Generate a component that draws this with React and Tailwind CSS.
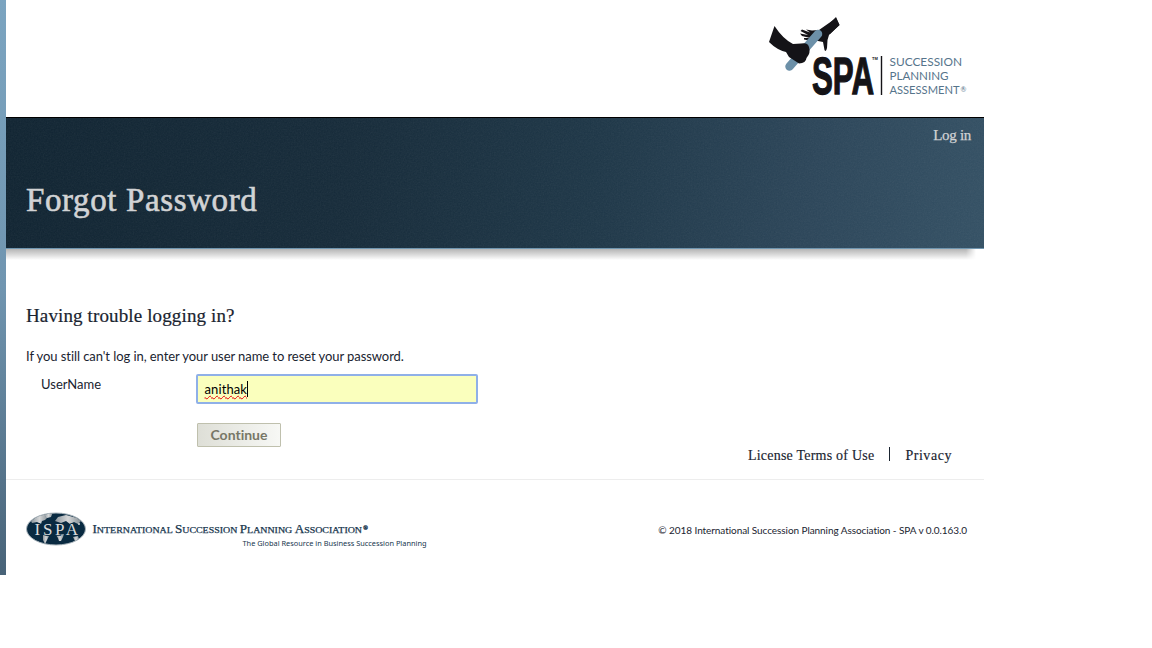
import React from "react";

function SpaLogo() {
  return (
    <svg width="220" height="100" viewBox="0 0 220 100" role="img" aria-label="SPA Succession Planning Assessment">
      <path d="M69 13 L76 8 L79.500 15 L72 22 L69 25 L67.500 30 L67 38 Q66 42.500 64.500 40 L63 32 L58 31 L51 31 L44 29.500 L44 28 L50 28 L42 26 L40 23.500 L48 25 L40.500 21 L42 19.500 L50 22.500 L46 19.500 L52 20.500 L59 20 Z" fill="#141317" />
      <path d="M69 14 L76 7 L79.500 15 L70 24 Z" fill="#141317" />
      <path d="M29.500 56.500 L58 24" stroke="#6c90a8" strokeWidth="8.500" strokeLinecap="round" />
      <path d="M14.500 16 L9 32 Q17 40 26 42 L29 47 L39 53.500 Q46 53 46.500 48 Q51 43 49 37 Q48 32 41 33.500 L33 34 Q23 29 14.500 16 Z" fill="#141317" />
      <text x="52" y="84" textLength="62" lengthAdjust="spacingAndGlyphs" fontFamily="Liberation Sans" fontWeight="700" fontSize="52" fill="#141317" stroke="#141317" strokeWidth="1.300">SPA</text>
      <text x="112" y="50" fontFamily="Liberation Sans" fontWeight="700" fontSize="4" fill="#141317">TM</text>
      <path d="M121.500 46 V85" stroke="#141317" strokeWidth="1.400" />
      <g fontFamily="Lato" fontSize="11.600" fill="#56748b">
        <text x="129.500" y="56" textLength="72.500" lengthAdjust="spacingAndGlyphs">SUCCESSION</text>
        <text x="129.500" y="70" textLength="59" lengthAdjust="spacingAndGlyphs">PLANNING</text>
        <text x="129.500" y="84" textLength="70" lengthAdjust="spacingAndGlyphs">ASSESSMENT</text>
        <text x="200.500" y="82" fontSize="7">®</text>
      </g>
    </svg>
  );
}

function IspaLogo() {
  return (
    <svg width="410" height="44" viewBox="0 0 410 44" role="img" aria-label="International Succession Planning Association">
      <defs>
        <linearGradient id="land" x1="0" x2="1">
          <stop offset="0" stopColor="#8c969d" />
          <stop offset=".5" stopColor="#d5d7d8" />
          <stop offset="1" stopColor="#858e94" />
        </linearGradient>
        <clipPath id="globe"><ellipse cx="30" cy="22" rx="29.300" ry="15.800" /></clipPath>
      </defs>
      <ellipse cx="30" cy="22" rx="29.500" ry="16" fill="#092a41" stroke="#a9b4bb" strokeWidth="1" />
      <g clipPath="url(#globe)" fill="url(#land)">
        <path d="M5 14 L12 9 L20 7 L19 9 L22 10 L19 13 L16 14 L15 17 L11 15 L6 16 Z" />
        <path d="M18 5 H27 L25 10 L21 11 L19 9 Z" />
        <path d="M29 14 L32 10 L40 8 L51 11 L55 14 L52 17 L48 15 L44 17 L40 14 L35 16 Z" />
        <path d="M17 28 L23 29 L21 33 L19 37 L17 33 Z" />
        <path d="M30 28 L38 27 L37 30 L35 34 L33 34 L32 31 Z" />
        <path d="M47 30 L52 29 L53 32 L49 34 Z" />
      </g>
      <text x="8.500" y="27.800" textLength="43.500" fontFamily="Liberation Serif" fontSize="17" fill="#d9dbdc" stroke="#092a41" strokeWidth="1.400" paintOrder="stroke">ISPA</text>
      <circle cx="53" cy="17" r="1" fill="#ddd" />
      <text x="66.500" y="26" textLength="269.500" lengthAdjust="spacingAndGlyphs" fontFamily="Liberation Serif" fontSize="11.500" fill="#17364e" stroke="#17364e" strokeWidth=".25">
        I<tspan fontSize="8.700">NTERNATIONAL </tspan>S<tspan fontSize="8.700">UCCESSION </tspan>P<tspan fontSize="8.700">LANNING </tspan>A<tspan fontSize="8.700">SSOCIATION</tspan>
      </text>
      <text x="337.300" y="23" fontFamily="Liberation Serif" fontWeight="700" fontSize="6" fill="#17364e" stroke="#17364e" strokeWidth=".4">®</text>
      <text x="216.500" y="39" textLength="184" lengthAdjust="spacingAndGlyphs" fontFamily="Noto Sans" fontSize="7.300" fill="#17364e">The Global Resource in Business Succession Planning</text>
    </svg>
  );
}

function Banner() {
  return (
    <div className="relative h-[143px]">
      <div className="absolute top-[132px] left-0 h-[11px] w-[970px] bg-linear-to-b from-[#b5b5b5] to-white [mask-image:linear-gradient(to_right,black_960px,transparent_970px)]" />
      <div className="relative flex h-[132px] flex-col overflow-hidden border-t border-b border-t-black border-b-[#7096b0] bg-[linear-gradient(97deg,#0f2331_0%,#152a39_35%,#1d3647_60%,#2b4559_82%,#335064_100%)] font-['Liberation_Serif',serif] text-[#d2d3d5]">
        <svg className="absolute inset-0 h-full w-full opacity-8" aria-hidden="true">
          <filter id="grain">
            <feTurbulence type="fractalNoise" baseFrequency=".7" numOctaves="2" />
            <feColorMatrix type="saturate" values="0" />
          </filter>
          <rect width="100%" height="100%" filter="url(#grain)" />
        </svg>
        <a className="relative mt-[7px] mr-[13px] self-end text-[15px] leading-5 tracking-[-0.3px] [-webkit-text-stroke:0.25px]">Log in</a>
        <h1 className="relative mt-[35px] ml-5 self-start text-[33px] leading-10 tracking-[0.62px] whitespace-nowrap [-webkit-text-stroke:0.6px]">Forgot Password</h1>
      </div>
    </div>
  );
}

export default function App() {
  return (
    <div className="h-[648px] w-[1152px] overflow-hidden bg-white">
      <div className="flex h-[575px] w-[984px]">
        <div className="w-1.5 shrink-0 bg-linear-to-b from-[#7ba4c0] via-[#7095b0] to-[#486378]" />
        <div className="flex w-[978px] flex-col font-['Lato',sans-serif] text-[13px] text-[#1a2430] [font-variant-ligatures:none]">
          <header className="flex h-[117px] items-start justify-end pt-[10px] pr-1">
            <SpaLogo />
          </header>
          <Banner />
          <main className="flex h-[219px] flex-col px-5">
            <h2 className="mt-[44px] font-['Liberation_Serif',serif] text-[19px] leading-6 tracking-[0.13px] [-webkit-text-stroke:0.2px]">
              Having trouble logging in?
            </h2>
            <p className="mt-[18px] leading-5 tracking-[-0.07px]">
              If you still can't log in, enter your user name to reset your password.
            </p>
            <div className="mt-[8px] flex h-[30px] pl-[15px]">
              <label className="w-[155px] leading-5">UserName</label>
              <div className="flex h-[30px] w-[282px] items-center rounded-[2px] border-2 border-[#8fb0e8] bg-[#faffbd] pl-[6.5px] text-black">
                <span className="border-r border-black leading-4 tracking-[0.1px] underline decoration-red-600 decoration-wavy decoration-[0.7px] underline-offset-[1px]">anithak</span>
              </div>
            </div>
            <div className="flex justify-between">
              <button className="mt-[19px] ml-[171px] h-6 w-[84px] rounded-[1px] border border-[#bfc0ad] bg-linear-to-r from-[#dedfd7] to-[#f7f8f5] text-[14px] leading-4 font-bold text-[#777767]">Continue</button>
              <nav className="mt-[42px] mr-[12px] flex h-5 items-center font-['Liberation_Serif',serif] text-[14px] leading-5 whitespace-nowrap [-webkit-text-stroke:0.15px]">
                <a className="tracking-[0.22px]">License Terms of Use</a>
                <span className="mx-[15px] mb-1 h-3.5 w-px bg-[#1a2430]" />
                <a className="tracking-[0.55px]">Privacy</a>
              </nav>
            </div>
          </main>
          <footer className="flex h-[96px] items-start justify-between border-t border-[#ededed] pr-[17px] pl-5">
            <div className="mt-[27px]"><IspaLogo /></div>
            <span className="mt-[42px] text-[10px] leading-4 tracking-[-0.07px] whitespace-nowrap">© 2018 International Succession Planning Association - SPA v 0.0.163.0</span>
          </footer>
        </div>
      </div>
    </div>
  );
}
